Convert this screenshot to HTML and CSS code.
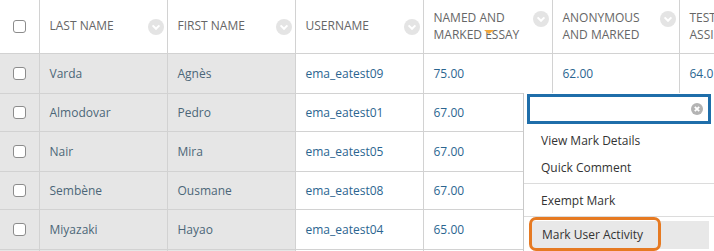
FILE: index.html
```html
<!DOCTYPE html>
<html>
<head>
<meta charset="utf-8">
<link rel="stylesheet" href="styles.css">
</head>
<body>
<div class="page">
  <table class="grid">
    <colgroup>
      <col class="c-check"><col class="c-name"><col class="c-name"><col class="c-name"><col class="c-named"><col class="c-anon"><col class="c-test">
    </colgroup>
    <thead>
      <tr>
        <th class="cb-cell"><span class="cb"></span></th>
        <th><div class="hd"><span class="hd-text">LAST NAME</span><svg class="chev" width="16" height="16" viewBox="0 0 16 16"><circle cx="8" cy="8" r="8" fill="#e4e4e4"/><polyline points="4.6,6.4 8,9.8 11.4,6.4" fill="none" stroke="#fff" stroke-width="2"/></svg></div></th>
        <th><div class="hd"><span class="hd-text">FIRST NAME</span><svg class="chev" width="16" height="16" viewBox="0 0 16 16"><circle cx="8" cy="8" r="8" fill="#e4e4e4"/><polyline points="4.6,6.4 8,9.8 11.4,6.4" fill="none" stroke="#fff" stroke-width="2"/></svg></div></th>
        <th><div class="hd"><span class="hd-text">USERNAME</span><svg class="chev" width="16" height="16" viewBox="0 0 16 16"><circle cx="8" cy="8" r="8" fill="#e4e4e4"/><polyline points="4.6,6.4 8,9.8 11.4,6.4" fill="none" stroke="#fff" stroke-width="2"/></svg></div></th>
        <th class="sorted"><div class="hd"><span class="hd-text">NAMED AND<br>MARKED ESSAY</span><svg class="chev" width="16" height="16" viewBox="0 0 16 16"><circle cx="8" cy="8" r="8" fill="#e4e4e4"/><polyline points="4.6,6.4 8,9.8 11.4,6.4" fill="none" stroke="#fff" stroke-width="2"/></svg></div><span class="sort-arrow"></span></th>
        <th><div class="hd"><span class="hd-text">ANONYMOUS<br>AND MARKED</span><svg class="chev" width="16" height="16" viewBox="0 0 16 16"><circle cx="8" cy="8" r="8" fill="#e4e4e4"/><polyline points="4.6,6.4 8,9.8 11.4,6.4" fill="none" stroke="#fff" stroke-width="2"/></svg></div></th>
        <th><div class="hd"><span class="hd-text">TEST<br>ASSI</span></div></th>
      </tr>
    </thead>
    <tbody>
      <tr>
        <td class="cb-cell fixed"><span class="cb"></span></td>
        <td class="fixed name">Varda</td>
        <td class="fixed name">Agnès</td>
        <td class="link">ema_eatest09</td>
        <td class="link">75.00</td>
        <td class="link">62.00</td>
        <td class="link">64.0</td>
      </tr>
      <tr>
        <td class="cb-cell fixed"><span class="cb"></span></td>
        <td class="fixed name">Almodovar</td>
        <td class="fixed name">Pedro</td>
        <td class="link">ema_eatest01</td>
        <td class="link">67.00</td>
        <td></td>
        <td></td>
      </tr>
      <tr>
        <td class="cb-cell fixed"><span class="cb"></span></td>
        <td class="fixed name">Nair</td>
        <td class="fixed name">Mira</td>
        <td class="link">ema_eatest05</td>
        <td class="link">67.00</td>
        <td></td>
        <td></td>
      </tr>
      <tr>
        <td class="cb-cell fixed"><span class="cb"></span></td>
        <td class="fixed name">Sembène</td>
        <td class="fixed name">Ousmane</td>
        <td class="link">ema_eatest08</td>
        <td class="link">67.00</td>
        <td></td>
        <td></td>
      </tr>
      <tr>
        <td class="cb-cell fixed"><span class="cb"></span></td>
        <td class="fixed name">Miyazaki</td>
        <td class="fixed name">Hayao</td>
        <td class="link">ema_eatest04</td>
        <td class="link">65.00</td>
        <td></td>
        <td></td>
      </tr>
      <tr>
        <td class="cb-cell fixed"><span class="cb"></span></td>
        <td class="fixed name"></td>
        <td class="fixed name"></td>
        <td class="link"></td>
        <td class="link"></td>
        <td></td>
        <td></td>
      </tr>
    </tbody>
  </table>

  <div class="menu">
    <div class="search">
      <svg class="clear" width="12" height="12" viewBox="0 0 12 12"><circle cx="6" cy="6" r="6" fill="#b3b3b3"/><path d="M3.8 3.8 L8.2 8.2 M8.2 3.8 L3.8 8.2" stroke="#fff" stroke-width="1.8"/></svg>
    </div>
    <div class="group first">
      <div class="item">View Mark Details</div>
      <div class="item">Quick Comment</div>
    </div>
    <div class="group second">
      <div class="item">Exempt Mark</div>
    </div>
    <div class="item active">Mark User Activity<span class="callout"></span></div>
  </div>
</div>
</body>
</html>
```

FILE: styles.css
```css
html, body {
  margin: 0;
  padding: 0;
  background: #fff;
}

body {
  width: 714px;
  height: 251px;
  overflow: hidden;
  font-family: "Open Sans", "Liberation Sans", sans-serif;
  font-size: 12px;
}

.page {
  position: relative;
  width: 714px;
  height: 251px;
  overflow: hidden;
}

.grid {
  border-collapse: collapse;
  table-layout: fixed;
  width: 829px;
}

.c-check { width: 39px; }
.c-name { width: 128px; }
.c-named { width: 129px; }
.c-anon { width: 127px; }
.c-test { width: 150px; }

.grid th,
.grid td {
  border: 1px solid #d2d2d2;
  padding: 0 10px;
  text-align: left;
  white-space: nowrap;
  overflow: hidden;
}

.grid thead tr {
  height: 53px;
}

.grid thead th {
  border-top: none;
  font-weight: normal;
  color: #666;
  vertical-align: middle;
  line-height: 17px;
}

.grid tbody tr:nth-child(odd) { height: 40px; }
.grid tbody tr:nth-child(even) { height: 38px; }

.grid tr > :first-child {
  border-left: none;
}

.grid td {
  vertical-align: middle;
  line-height: 17px;
}

.cb-cell {
  padding: 0 0 0 13px !important;
}

.cb {
  display: block;
  width: 11px;
  height: 11px;
  border: 1px solid #8c8c8c;
  border-radius: 3px;
  background: #fff;
}

.hd {
  display: flex;
  align-items: flex-start;
  justify-content: space-between;
  margin-right: -7px;
}

.chev {
  flex: none;
  margin-top: 2px;
}

.sorted {
  position: relative;
}

.sort-arrow {
  position: absolute;
  left: 60px;
  top: 30px;
  width: 0;
  height: 0;
  border-left: 5.5px solid transparent;
  border-right: 5.5px solid transparent;
  border-top: 4px solid #f2a83a;
}

.fixed {
  background: #e6e6e6;
}

.name {
  color: #4c6678;
}

.link {
  color: #2b6590;
}

/* context menu overlay */
.menu {
  position: absolute;
  left: 523px;
  top: 93px;
  width: 196px;
  height: 170px;
  background: #fff;
  border-left: 1px solid #c9c9c9;
  padding: 1px 0 0 3px;
  box-sizing: border-box;
  color: #333;
}

.search {
  width: 184px;
  height: 30px;
  box-sizing: border-box;
  border: 3px solid #1f6eaa;
  display: flex;
  align-items: center;
  justify-content: flex-end;
  padding-right: 5px;
}

.group {
  margin-left: -3px;
  border-bottom: 1px solid #dcdcdc;
}

.group.first {
  padding: 3px 0 2px;
}

.group.second {
  padding: 4px 0 2px;
}

.item {
  height: 27px;
  line-height: 27px;
  padding-left: 17px;
  white-space: nowrap;
}

.group.second .item {
  height: 26px;
  line-height: 26px;
}

.item.active {
  position: relative;
  margin: 4px 0 0 4px;
  width: 178px;
  height: 28px;
  line-height: 28px;
  padding-left: 11px;
  box-sizing: border-box;
  background: #e8e8e8;
}

.callout {
  position: absolute;
  left: -2px;
  top: -4px;
  width: 132px;
  height: 34px;
  box-sizing: border-box;
  border: 3px solid #e67a22;
  border-radius: 7px;
}
```
